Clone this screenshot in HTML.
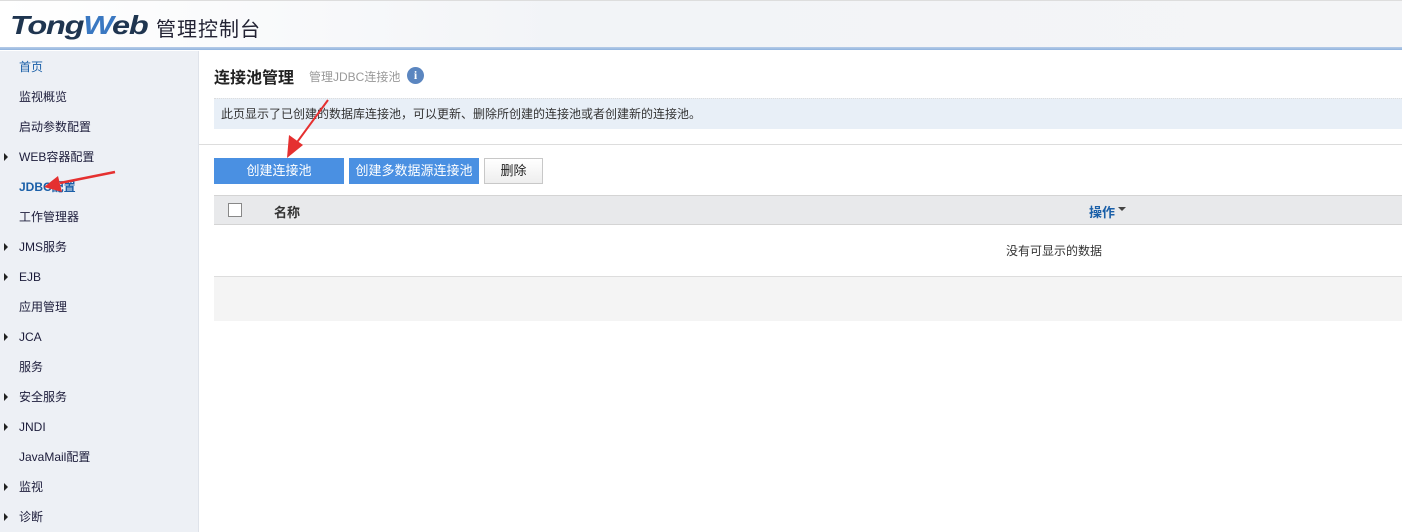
<!DOCTYPE html>
<html><head><meta charset="utf-8"><style>
body{margin:0;width:1402px;height:532px;overflow:hidden;font-family:"Liberation Sans","Noto Sans CJK SC",sans-serif;font-size:12px;background:#fff;position:relative}
.hdr{position:absolute;left:0;top:0;width:1402px;height:47px;background:linear-gradient(90deg,#fff 0%,#f2f4f7 40%,#f4f5f7 100%);border-top:1px solid #ddd}
.hl{position:absolute;left:0;top:47px;width:1402px;height:3px;background:linear-gradient(#b8cde8,#8fb3de)}
.logo{position:absolute;left:10px;top:9px;font-size:26px;font-style:italic;font-weight:bold;color:#1f3550;letter-spacing:-1px;transform:scaleX(1.25);transform-origin:left}
.logo span{color:#3a78c2}
.cn{position:absolute;left:156px;top:12px;font-size:20px;color:#223;letter-spacing:1px}
.side{position:absolute;left:0;top:51px;width:198px;height:481px;background:#edf0f5;border-right:1px solid #dfe3ea}
.side div{position:absolute;left:19px;height:20px;line-height:20px;color:#1c1c3a}
.side div.t::before{content:"";position:absolute;left:-15px;top:6px;border-left:4px solid #222;border-top:4px solid transparent;border-bottom:4px solid transparent}
.a{position:absolute}
</style></head><body>
<div class="hdr"><div class="logo">Tong<span>W</span>eb</div><div class="cn">管理控制台</div></div>
<div class="hl"></div>
<div class="side">
<div style="top:6px;color:#1a5fa8">首页</div>
<div style="top:36px">监视概览</div>
<div style="top:66px">启动参数配置</div>
<div class="t" style="top:96px">WEB容器配置</div>
<div style="top:126px;color:#1a5fa8;font-weight:bold">JDBC配置</div>
<div style="top:156px">工作管理器</div>
<div class="t" style="top:186px">JMS服务</div>
<div class="t" style="top:216px">EJB</div>
<div style="top:246px">应用管理</div>
<div class="t" style="top:276px">JCA</div>
<div style="top:306px">服务</div>
<div class="t" style="top:336px">安全服务</div>
<div class="t" style="top:366px">JNDI</div>
<div style="top:396px">JavaMail配置</div>
<div class="t" style="top:426px">监视</div>
<div class="t" style="top:456px">诊断</div>
</div>
<div class="a" style="left:214px;top:64px;font-size:16px;color:#222;font-weight:bold">连接池管理</div>
<div class="a" style="left:309px;top:68px;font-size:12px;color:#999">管理JDBC连接池</div>
<div class="a" style="left:407px;top:67px;width:17px;height:17px;border-radius:50%;background:#5b86c0;color:#fff;font-weight:bold;font-size:12px;text-align:center;line-height:17px;font-family:'Liberation Serif',serif">i</div>
<div class="a" style="left:214px;top:98px;width:1188px;height:30px;background:#e8eff7;border-top:1px dotted #ddd;line-height:30px;color:#333;text-indent:7px">此页显示了已创建的数据库连接池，可以更新、删除所创建的连接池或者创建新的连接池。</div>
<div class="a" style="left:199px;top:144px;width:1203px;height:1px;background:#ddd"></div>
<div class="a" style="left:214px;top:158px;width:130px;height:26px;background:#4a90e2;color:#fff;text-align:center;line-height:26px;font-size:13px">创建连接池</div>
<div class="a" style="left:349px;top:158px;width:130px;height:26px;background:#4a90e2;color:#fff;text-align:center;line-height:26px;font-size:13px">创建多数据源连接池</div>
<div class="a" style="left:484px;top:158px;width:57px;height:24px;background:linear-gradient(#fff,#eee);border:1px solid #c8c8c8;text-align:center;line-height:24px;font-size:13px;color:#222">删除</div>
<div class="a" style="left:214px;top:195px;width:1188px;height:28px;background:#e8e9eb;border-top:1px solid #d4d4d4;border-bottom:1px solid #d4d4d4"></div>
<div class="a" style="left:228px;top:203px;width:12px;height:12px;border:1px solid #888;background:#fff"></div>
<div class="a" style="left:274px;top:202px;font-weight:bold;font-size:13px;color:#333">名称</div>
<div class="a" style="left:1089px;top:202px;font-weight:bold;font-size:13px;color:#1a5fa8">操作</div>
<div class="a" style="left:1118px;top:207px;border-top:4px solid #444;border-left:4px solid transparent;border-right:4px solid transparent"></div>
<div class="a" style="left:1006px;top:242px;color:#333">没有可显示的数据</div>
<div class="a" style="left:214px;top:276px;width:1188px;height:44px;background:#f4f4f4;border-top:1px solid #ddd"></div>
<svg class="a" style="left:0;top:0" width="1402" height="532">
<path d="M328 100 L295 145" stroke="#e53030" stroke-width="2" fill="none"/>
<polygon points="287,158 289,135 303,145" fill="#e53030"/>
<path d="M115 172 L60 183" stroke="#e53030" stroke-width="2.5" fill="none"/>
<polygon points="44,187 58,176 62,192" fill="#e53030"/>
</svg>
</body></html>
